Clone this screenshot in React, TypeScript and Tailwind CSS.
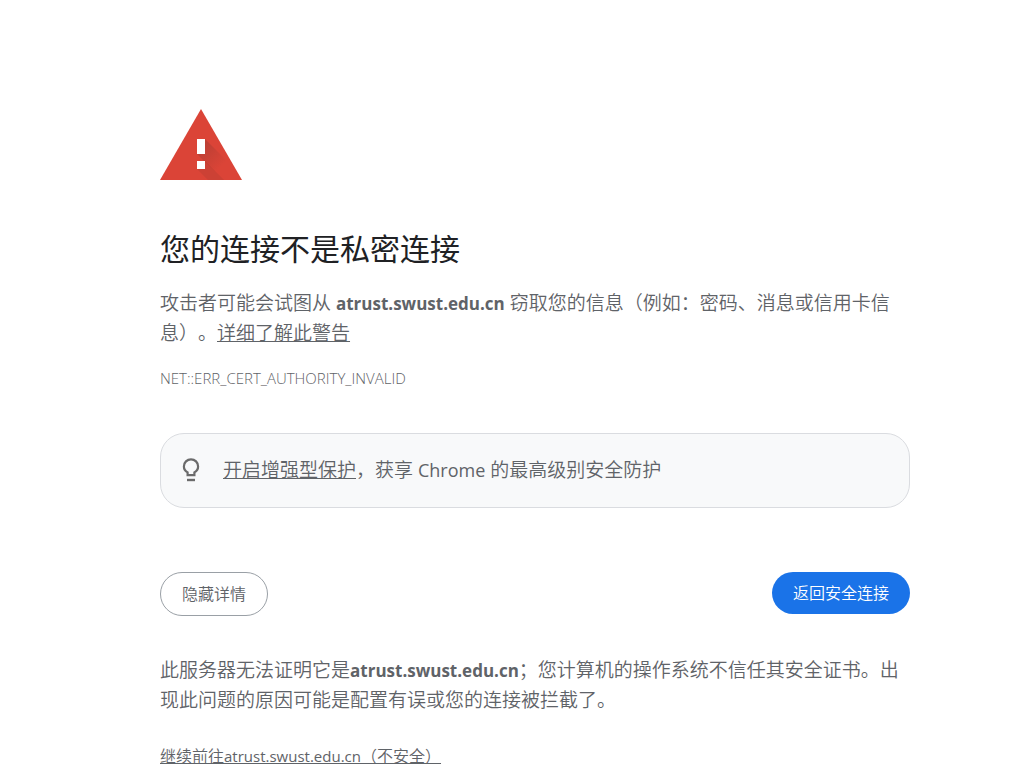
const DOMAIN = "atrust.swust.edu.cn";

function WarningIcon() {
  return (
    <svg
      className="block h-[71px] w-[82px]"
      viewBox="0 0 82 71"
      aria-hidden="true"
    >
      <defs>
        <linearGradient id="shade" x1="37" y1="40" x2="58" y2="61" gradientUnits="userSpaceOnUse">
          <stop offset="0" stopColor="#262626" stopOpacity="0.18" />
          <stop offset="1" stopColor="#262626" stopOpacity="0" />
        </linearGradient>
      </defs>
      <path d="M41 0 82 71H0z" fill="#db4437" />
      <path d="M45 30 72 57 80 71H63L37 45z" fill="url(#shade)" />
      <path d="M45 52 64 71H48L37 60z" fill="#262626" fillOpacity="0.08" />
      <path d="M37 30h8v15h-8zM37 52h8v8h-8z" fill="#fff" />
    </svg>
  );
}

function BulbIcon() {
  return (
    <svg
      className="h-6 w-[18px] shrink-0"
      viewBox="0 0 18 24"
      fill="none"
      stroke="#6b6b6b"
      strokeWidth="2.2"
      aria-hidden="true"
    >
      <path d="M5.6 17.2v-2.8C3.3 13 1.9 11 1.9 8.4a7.1 7.1 0 0 1 14.2 0c0 2.6-1.4 4.6-3.7 6v2.8z" />
      <path d="M5 22h8" strokeWidth="2.4" />
    </svg>
  );
}

export default function App() {
  return (
    <main
      lang="zh-CN"
      className="ml-40 mr-[125px] max-w-[750px] pt-[109px] pb-4 text-[19px] leading-[30px] font-[350] text-[#5f6368] font-['Open_Sans','Noto_Sans_CJK_SC',sans-serif] [text-spacing-trim:space-all]"
    >
      <WarningIcon />
      <h1 className="mt-[51px] text-[30px] leading-9 font-normal text-[#202124]">
        您的连接不是私密连接
      </h1>
      <p className="mt-[21px]">
        攻击者可能会试图从{" "}
        <strong className="text-[17px] leading-none font-bold">{DOMAIN}</strong>{" "}
        窃取您的信息（例如：密码、消息或信用卡信息）。
        <a href="#learn-more" className="underline">
          详细了解此警告
        </a>
      </p>
      <p className="mt-[15px] text-[15px]">NET::ERR_CERT_AUTHORITY_INVALID</p>

      <div className="mt-10 flex items-center gap-[23px] rounded-3xl border border-[#dadce0] bg-[#f8f9fa] px-[21px] pt-[21px] pb-[22px]">
        <BulbIcon />
        <p>
          <a href="#enhanced-protection" className="underline">
            开启增强型保护
          </a>
          ，获享{" "}
          <span className="text-[18px] leading-none font-normal">Chrome</span>{" "}
          的最高级别安全防护
        </p>
      </div>

      <div className="mt-16 flex items-start justify-between text-[16px] leading-[22px]">
        <button
          type="button"
          className="rounded-full border border-[#9aa0a6] px-[21px] py-2.5"
        >
          隐藏详情
        </button>
        <button
          type="button"
          className="rounded-full bg-[#1a73e8] px-[21px] py-2.5 text-white"
        >
          返回安全连接
        </button>
      </div>

      <p className="mt-[39px]">
        此服务器无法证明它是
        <strong className="text-[17px] leading-none font-bold">{DOMAIN}</strong>
        ；您计算机的操作系统不信任其安全证书。出现此问题的原因可能是配置有误或您的连接被拦截了。
      </p>
      <p className="mt-[26px] text-[16px]">
        <a href="#proceed" className="underline">
          继续前往
          <span className="text-[15px] leading-none font-normal">{DOMAIN}</span>
          （不安全）
        </a>
      </p>
    </main>
  );
}
